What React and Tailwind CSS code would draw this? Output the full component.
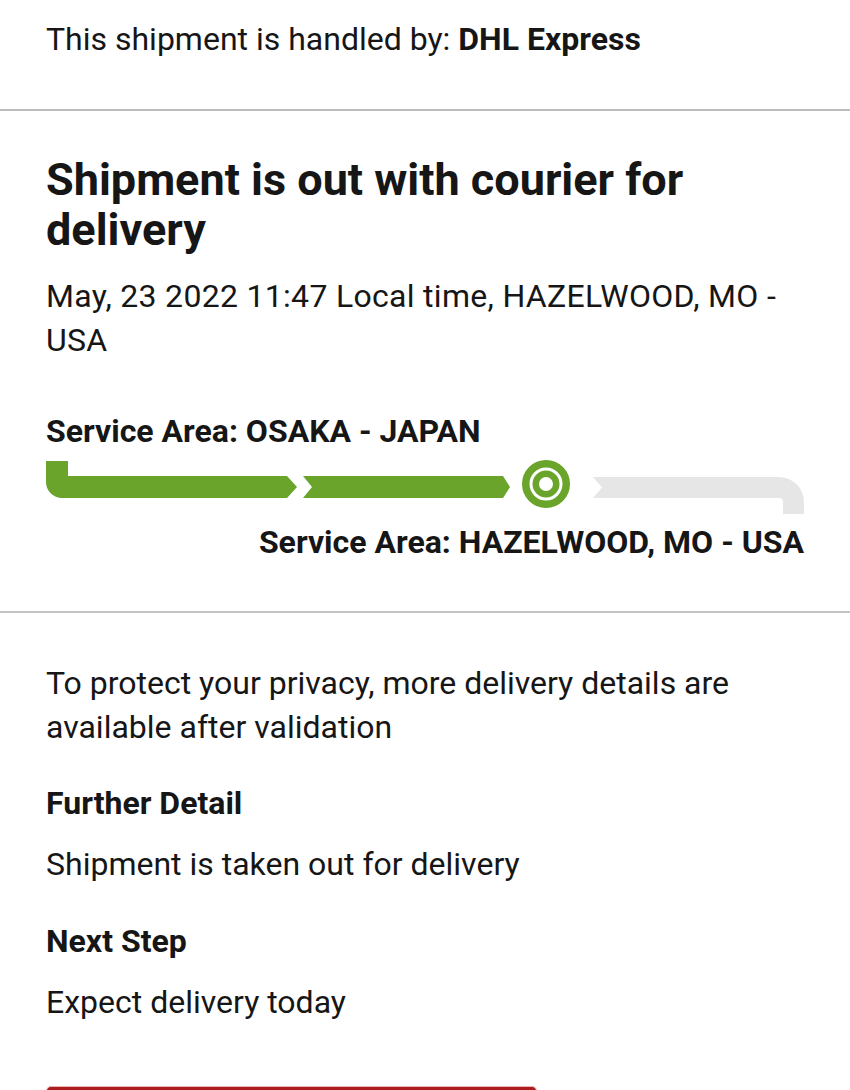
import React from "react";

function ProgressBar() {
  return (
    <svg width="758" height="60" viewBox="0 0 758 60" className="block mt-[6px]">
      {/* segment 1 (green, with upward stub) */}
      <path
        d="M0,6 H22 V21 H241 L251,32 L241,43 H16 A16,16 0 0 1 0,27 Z"
        fill="#6aa42b"
      />
      {/* segment 2 (green) */}
      <path d="M257,21 H457 L464,32 L457,43 H257 L266,32 Z" fill="#6aa42b" />
      {/* current position marker */}
      <circle cx="500" cy="29" r="20.25" fill="none" stroke="#6aa42b" strokeWidth="7.5" />
      <circle cx="500" cy="29" r="10.25" fill="none" stroke="#6aa42b" strokeWidth="6.5" />
      {/* segment 3 (grey, with downward stub) */}
      <path
        d="M547,22 H733 A25,25 0 0 1 758,47 V59 H737 V47 Q737,43 733,43 H547 L556,32.5 Z"
        fill="#e6e6e6"
      />
    </svg>
  );
}

export default function App() {
  const font = { fontFamily: "Roboto, 'Noto Sans', sans-serif" };
  return (
    <div className="w-[850px] h-[1090px] overflow-hidden bg-white text-[#161616]" style={font}>
      <section className="px-[46px] pt-[17px] pb-[48px] border-b-2 border-[#bdbdbd]">
        <p className="text-[32px] leading-[44px]">
          This shipment is handled by: <span className="font-bold">DHL Express</span>
        </p>
      </section>

      <section className="px-[46px] pt-[44px] pb-[51px] border-b-2 border-[#c4c4c4]">
        <h1 className="text-[45px] leading-[50px] font-bold w-[700px]">
          Shipment is out with courier for delivery
        </h1>
        <p className="mt-[19px] text-[32px] leading-[44px] tracking-[0.3px]">
          May, 23 2022 11:47 Local time, HAZELWOOD, MO - USA
        </p>
        <p className="mt-[51px] text-[32px] leading-[36px] font-bold">
          Service Area: OSAKA - JAPAN
        </p>
        <ProgressBar />
        <p className="mt-[9px] text-[32px] leading-[36px] font-bold text-right">
          Service Area: HAZELWOOD, MO - USA
        </p>
      </section>

      <section className="px-[46px] pt-[48px]">
        <p className="text-[32px] leading-[44px]">
          To protect your privacy, more delivery details are available after validation
        </p>
        <h2 className="mt-[36px] text-[32px] leading-[36px] font-bold">
          Further Detail
        </h2>
        <p className="mt-[21px] text-[32px] leading-[44px]">
          Shipment is taken out for delivery
        </p>
        <h2 className="mt-[37px] text-[32px] leading-[36px] font-bold">
          Next Step
        </h2>
        <p className="mt-[21px] text-[32px] leading-[44px]">
          Expect delivery today
        </p>
        <button className="mt-[62px] w-[491px] h-[56px] rounded-[5px] bg-[#ad1d1d] border border-[#e8b4b4]" />
      </section>
    </div>
  );
}
